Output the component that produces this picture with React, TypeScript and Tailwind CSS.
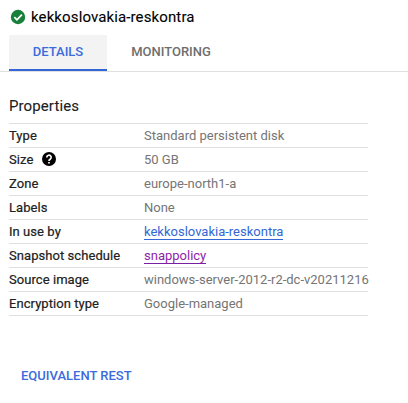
const rows = [
  { label: 'Type', value: 'Standard persistent disk' },
  { label: 'Size', value: '50 GB', help: true },
  { label: 'Zone', value: 'europe-north1-a' },
  { label: 'Labels', value: 'None' },
  { label: 'In use by', value: 'kekkoslovakia-reskontra', link: 'text-[#3367d6] border-[#3367d6]' },
  { label: 'Snapshot schedule', value: 'snappolicy', link: 'text-[#8e24aa] border-[#7b1fa2]' },
  { label: 'Source image', value: 'windows-server-2012-r2-dc-v20211216' },
  { label: 'Encryption type', value: 'Google-managed' },
];

export default function App() {
  return (
    <div className="flex h-[403px] w-[408px] flex-col overflow-hidden bg-white font-[Roboto,sans-serif] text-[13px] text-[#212121]">
      <header className="mb-px flex h-[34px] items-center gap-[5px] pl-[10px]">
        <svg width="16" height="16" viewBox="0 0 16 16">
          <circle cx="8" cy="8" r="7.2" fill="#188038" />
          <path d="M4.3 8.2 6.9 10.8 11.9 5.7" fill="none" stroke="#fff" strokeWidth="1.8" />
        </svg>
        <h1 className="text-[15px] leading-5 tracking-[0.12px] text-black [-webkit-text-stroke:0.1px_black]">kekkoslovakia-reskontra</h1>
      </header>
      <nav className="flex h-[37px] border-b border-[#e0e0e0] pl-[9px] font-medium">
        <div className="flex h-[36px] w-[98px] items-center justify-center border-b-2 border-[#3367d6] bg-[#f3f3f3] text-[#3b6bdc]">DETAILS</div>
        <div className="flex h-[36px] w-[128px] items-center justify-center pb-[2px] text-[#6e6e6e]">MONITORING</div>
      </nav>
      <main className="pl-[9px] pt-[24px]">
        <h2 className="h-[27px] text-[15px] leading-5 tracking-[0.1px] [-webkit-text-stroke:0.1px_#212121]">Properties</h2>
        <dl className="w-[359px] border-t border-[#e0e0e0]">
          {rows.map((row) => (
            <div key={row.label} className="flex h-6 items-center border-b border-[#e0e0e0] leading-4">
              <dt className="flex w-[135px] shrink-0 items-center gap-[9px] tracking-[0.06px] [-webkit-text-stroke:0.2px_#212121]">
                {row.label}
                {row.help && (
                  <svg className="mb-0.5" width="14" height="14" viewBox="0 0 14 14">
                    <circle cx="7" cy="7" r="7" fill="#000" />
                    <path d="M4.8 5.5a2.2 2.2 0 1 1 3.4 1.7C7.4 7.7 7 8 7 9M7 10v1.6" fill="none" stroke="#fff" strokeWidth="1.7" />
                  </svg>
                )}
              </dt>
              <dd className="whitespace-nowrap text-[#757575]">
                {row.link ? <a className={`inline-block border-b leading-[15px] ${row.link}`}>{row.value}</a> : row.value}
              </dd>
            </div>
          ))}
        </dl>
        <button className="ml-3 mt-[52px] font-medium leading-4 text-[#3b6bdc]">EQUIVALENT REST</button>
      </main>
    </div>
  );
}
